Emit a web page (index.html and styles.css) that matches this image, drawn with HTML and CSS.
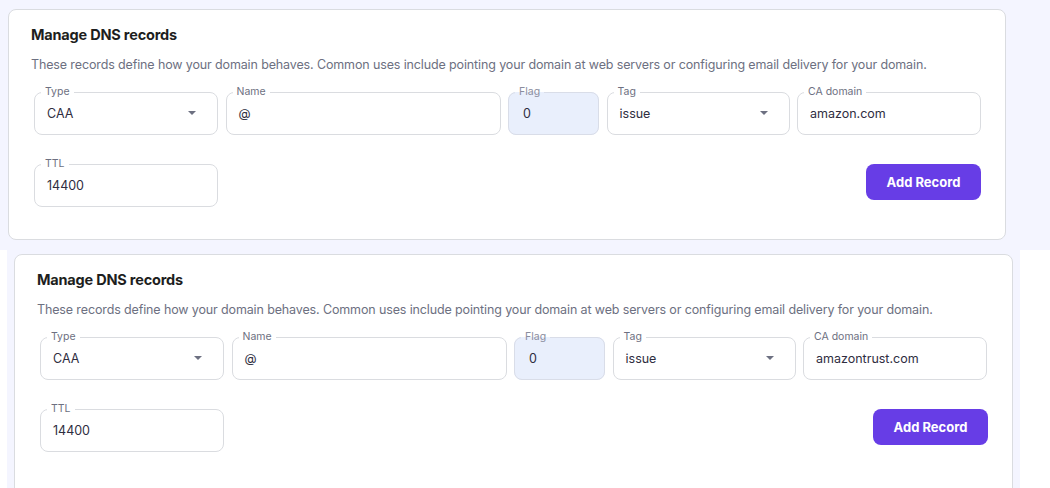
FILE: index.html
```html
<!DOCTYPE html>
<html lang="en">
<head>
<meta charset="utf-8">
<title>Manage DNS records</title>
<link rel="stylesheet" href="styles.css">
</head>
<body>
<section class="shot shot-top">
  <div class="card">
    <h2 class="card-title">Manage DNS records</h2>
    <p class="card-desc">These records define how your domain behaves. Common uses include pointing your domain at web servers or configuring email delivery for your domain.</p>
    <div class="fields">
      <fieldset class="field">
        <legend>Type</legend>
        <div class="value select"><span>CAA</span><svg class="caret" width="8" height="4" viewBox="0 0 8 4"><path d="M0 0h8L4 4z"/></svg></div>
      </fieldset>
      <fieldset class="field">
        <legend>Name</legend>
        <div class="value"><span>@</span></div>
      </fieldset>
      <fieldset class="field field-disabled">
        <legend>Flag</legend>
        <div class="value"><span>0</span></div>
      </fieldset>
      <fieldset class="field">
        <legend>Tag</legend>
        <div class="value select"><span>issue</span><svg class="caret" width="8" height="4" viewBox="0 0 8 4"><path d="M0 0h8L4 4z"/></svg></div>
      </fieldset>
      <fieldset class="field">
        <legend>CA domain</legend>
        <div class="value"><span>amazon.com</span></div>
      </fieldset>
    </div>
    <div class="row-2">
      <fieldset class="field field-ttl">
        <legend>TTL</legend>
        <div class="value"><span>14400</span></div>
      </fieldset>
      <button class="btn-primary" type="button">Add Record</button>
    </div>
  </div>
</section>
<section class="shot shot-bottom">
  <div class="frame">
    <div class="card card-2">
      <h2 class="card-title">Manage DNS records</h2>
      <p class="card-desc">These records define how your domain behaves. Common uses include pointing your domain at web servers or configuring email delivery for your domain.</p>
      <div class="fields">
        <fieldset class="field">
          <legend>Type</legend>
          <div class="value select"><span>CAA</span><svg class="caret" width="8" height="4" viewBox="0 0 8 4"><path d="M0 0h8L4 4z"/></svg></div>
        </fieldset>
        <fieldset class="field">
          <legend>Name</legend>
          <div class="value"><span>@</span></div>
        </fieldset>
        <fieldset class="field field-disabled">
          <legend>Flag</legend>
          <div class="value"><span>0</span></div>
        </fieldset>
        <fieldset class="field">
          <legend>Tag</legend>
          <div class="value select"><span>issue</span><svg class="caret" width="8" height="4" viewBox="0 0 8 4"><path d="M0 0h8L4 4z"/></svg></div>
        </fieldset>
        <fieldset class="field">
          <legend>CA domain</legend>
          <div class="value"><span>amazontrust.com</span></div>
        </fieldset>
      </div>
      <div class="row-2">
        <fieldset class="field field-ttl">
          <legend>TTL</legend>
          <div class="value"><span>14400</span></div>
        </fieldset>
        <button class="btn-primary" type="button">Add Record</button>
      </div>
    </div>
  </div>
</section>
</body>
</html>
```
FILE: styles.css
```css
* { box-sizing: border-box; }

html, body {
  margin: 0;
  padding: 0;
  background: #ffffff;
  overflow: hidden;
  font-family: Inter, "DejaVu Sans", sans-serif;
}

.shot-top {
  height: 250px;
  background: #f4f5ff;
  padding: 9px 0 0 8px;
}

.shot-bottom {
  height: 238px;
  padding-left: 7px;
  background: #ffffff;
}

.frame {
  width: 1013px;
  height: 238px;
  background: #f4f5ff;
  padding: 4px 0 0 7px;
  overflow: hidden;
}

.card {
  width: 998px;
  height: 231px;
  background: #ffffff;
  border: 1px solid #dadce0;
  border-radius: 8px;
  padding: 15px 22px 0 22px;
}

.card-2 {
  width: 999px;
  height: 260px;
}

.card-title {
  margin: 0;
  font-size: 14.5px;
  line-height: 20px;
  font-weight: 700;
  letter-spacing: -0.2px;
  color: #1d1e20;
}

.card-desc {
  margin: 11px 0 0 0;
  font-size: 12.5px;
  line-height: 18px;
  letter-spacing: -0.13px;
  color: #6d7081;
}

.fields {
  display: grid;
  grid-template-columns: 184px 275px 91px 183px 184px;
  column-gap: 7.5px;
  margin: 12px 0 0 3px;
}

.field {
  margin: 0;
  min-width: 0;
  padding: 0 6px;
  border: 1px solid #dadce0;
  border-radius: 8px;
  background: #ffffff;
}

.field legend {
  margin: 0;
  padding: 0 4px;
  font-size: 10.5px;
  line-height: 12px;
  color: #6d7081;
}

.field-disabled {
  background: #e9effc;
  border-color: #d9dde8;
}

.field-disabled legend {
  color: #8a8d9e;
}

.value {
  display: flex;
  align-items: center;
  height: 30px;
  margin-bottom: 6px;
  padding: 0 6px;
  font-size: 12.5px;
  color: #2f2e3f;
  white-space: nowrap;
}

.value.select {
  justify-content: space-between;
  padding-right: 15px;
}

.field-disabled .value {
  padding-left: 8px;
}

.caret {
  display: block;
  fill: #6d7081;
}

.row-2 {
  display: flex;
  justify-content: space-between;
  align-items: flex-start;
  margin: 23px 2px 0 3px;
}

.field-ttl {
  width: 184px;
}

.btn-primary {
  width: 115px;
  height: 36px;
  margin-top: 6px;
  border: 0;
  border-radius: 8px;
  background: #673de6;
  color: #ffffff;
  font-family: Inter, "DejaVu Sans", sans-serif;
  font-size: 13px;
  font-weight: 700;
  cursor: pointer;
}
```
